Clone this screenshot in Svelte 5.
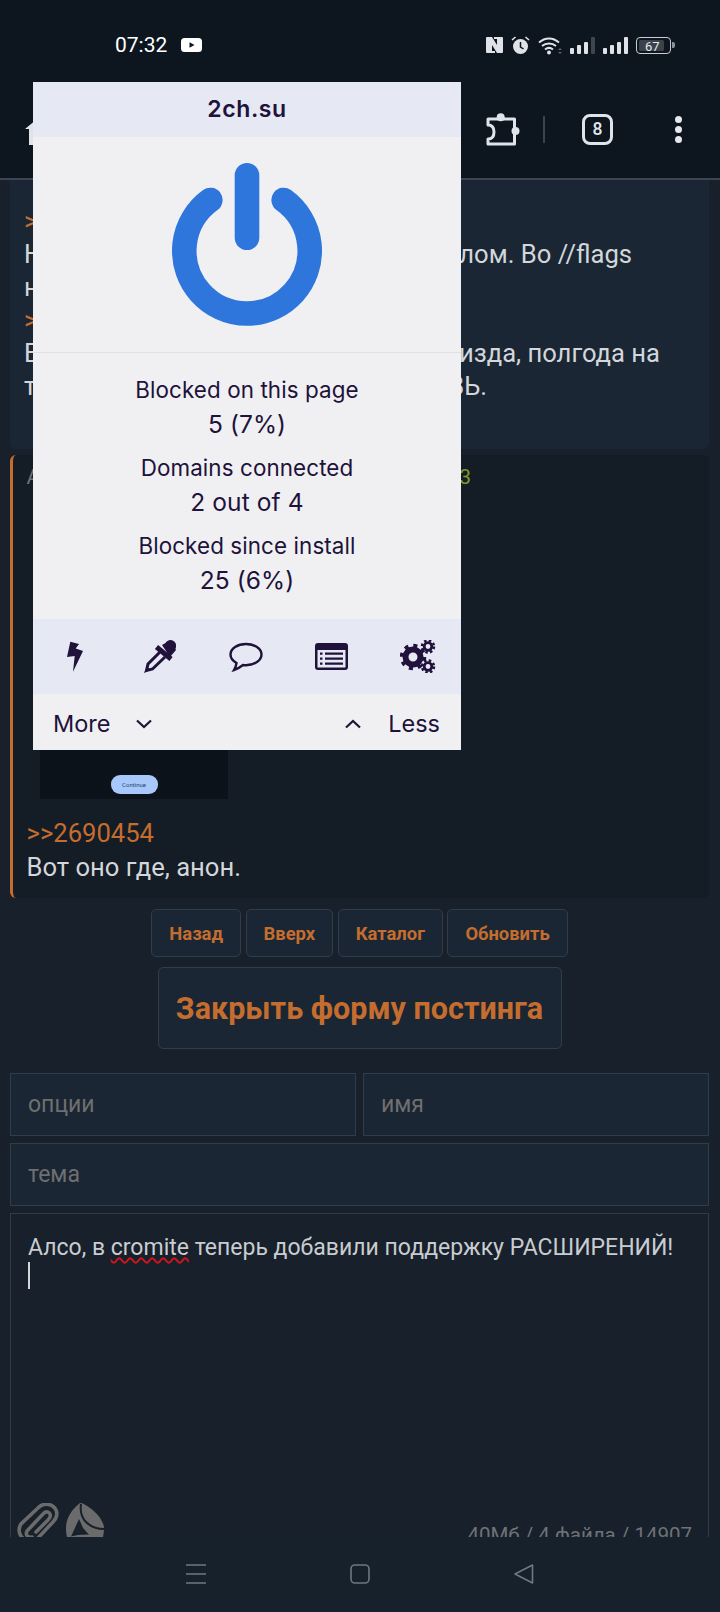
<script>
  const stats = [
    ['Blocked on this page', '5 (7%)'],
    ['Domains connected', '2 out of 4'],
    ['Blocked since install', '25 (6%)']
  ];
  const navButtons = ['Назад', 'Вверх', 'Каталог', 'Обновить'];
</script>

<div class="page">
  <header class="top">
    <div class="status">
      <span class="time">07:32</span>
      <svg class="yt" viewBox="0 0 21 14"><rect width="21" height="14" rx="3.5" fill="#fff"/><path d="M8.5 4.2 13.5 7l-5 2.8z" fill="#0d151f"/></svg>
      <div class="sys">
        <svg width="17" height="16" viewBox="0 0 17 16"><path d="M0 1a1 1 0 0 1 1-1h5l5 8V2H8V0h8a1 1 0 0 1 1 1v14a1 1 0 0 1-1 1h-5L6 8v6h3v2H1a1 1 0 0 1-1-1z" fill="#dfe2e6"/></svg>
        <svg width="19" height="18" viewBox="0 0 19 18"><circle cx="9.5" cy="10.5" r="7.5" fill="#dfe2e6"/><path d="M9.5 6v5l3 2" stroke="#0d151f" stroke-width="1.5" fill="none"/><path d="M1 4 4.5 1M18 4l-3.500-3" stroke="#dfe2e6" stroke-width="1.600"/></svg>
        <svg width="24" height="19" viewBox="0 0 24 19" fill="none" stroke="#dfe2e6" stroke-width="2"><path d="M1 6.500c6-5.500 14-5.500 20 0M4 10c4-3.500 10-3.500 14 0M7 13.500c2.500-2 5.500-2 8 0"/><circle cx="11" cy="16.500" r="2" fill="#dfe2e6" stroke="none"/><path d="M20 14l2-2 2 2zM20 16l2 2 2-2z" fill="#5a626c" stroke="none"/></svg>
        <svg width="25" height="17" viewBox="0 0 25 17"><rect y="11" width="4" height="6" rx="1" fill="#dfe2e6"/><rect x="7" y="8" width="4" height="9" rx="1" fill="#dfe2e6"/><rect x="14" y="5" width="4" height="12" rx="1" fill="#dfe2e6"/><rect x="21" width="4" height="17" rx="1" fill="#3d454e"/></svg>
        <svg width="25" height="17" viewBox="0 0 25 17"><rect y="11" width="4" height="6" rx="1" fill="#dfe2e6"/><rect x="7" y="8" width="4" height="9" rx="1" fill="#dfe2e6"/><rect x="14" y="5" width="4" height="12" rx="1" fill="#dfe2e6"/><rect x="21" width="4" height="17" rx="1" fill="#dfe2e6"/></svg>
        <div class="battery"><span class="level">67</span><i class="nub"></i></div>
      </div>
    </div>
    <div class="toolbar">
      <svg class="home" width="36" height="32" viewBox="0 0 36 32"><path d="M18 0 0 15h4v16h28V15h4z" fill="#dfe3ea"/></svg>
      <svg class="puzzle" width="34" height="34" viewBox="0 0 34 34">
        <path d="M2 6h26.500v25H2v-5c4.500 0 6-3.500 6-7s-1.500-7-6-7z" fill="none" stroke="#dfe3ea" stroke-width="3" stroke-linejoin="round"/>
        <circle cx="14.700" cy="4.200" r="4" fill="#dfe3ea"/>
        <circle cx="29.500" cy="18" r="4" fill="#dfe3ea"/>
      </svg>
      <i class="sep"></i>
      <div class="tabs">8</div>
      <div class="dots"><i></i><i></i><i></i></div>
    </div>
  </header>

  <main class="content">
    <article class="post first">
      <div class="line l1"><span class="quote">&gt;</span></div>
      <div class="line l2"><span>Н</span><span>лом. Во //flags</span></div>
      <div class="line"><span>н</span></div>
      <div class="line"><span class="quote">&gt;</span></div>
      <div class="line l5"><span>Е</span><span>изда, полгода на</span></div>
      <div class="line l6"><span>т</span><span>ВЬ.</span></div>
    </article>

    <article class="post second">
      <div class="line meta"><span class="name">А</span><span class="num">3</span></div>
      <div class="thumb"><span class="continue">Continue</span></div>
      <div class="line quote">&gt;&gt;2690454</div>
      <div class="line">Вот оно где, анон.</div>
    </article>

    <nav class="buttons">
      {#each navButtons as b}<button class="btn">{b}</button>{/each}
    </nav>
    <button class="btn big">Закрыть форму постинга</button>

    <form class="form">
      <div class="row">
        <input placeholder="опции" />
        <input placeholder="имя" />
      </div>
      <input placeholder="тема" />
      <div class="area">
        <div class="msg">Алсо, в <span class="typo">cromite</span> теперь добавили поддержку РАСШИРЕНИЙ!</div>
        <i class="caret"></i>
        <div class="tools">
          <svg width="42" height="40" viewBox="0 0 42 40" fill="none" stroke="#6b6b6b" stroke-width="3.600" stroke-linecap="round"><path d="M9 37C3 35 0 27 4 21L22 4c6-5 14-3 17 3 2 5 0 9-3 12L20 36"/><path d="M15 34c-4 1-7-2-5-6L27 10c2-2 5-1 6 1s0 4-2 6L19 29"/></svg>
          <svg width="38" height="40" viewBox="0 0 38 40">
            <path d="M14 0C6 6 0 15 0 25c0 6 1 10 3 15h32c2-4 3-10 3-15C38 18 30 9 24 5 20 2 17 0 14 0z" fill="#6b6b6b"/>
            <path d="M15 1c-1 7 0 13 5 18 4 4 11 7 18 7" fill="none" stroke="#17202b" stroke-width="2"/>
            <path d="M13 16 3 38h31v-5l-9 1-8-9z" fill="#17202b"/>
            <path d="M3 34c7-3 25-3 33-2l-1 8H3z" fill="#6b6b6b"/>
          </svg>
        </div>
        <div class="count">40Мб / 4 файла / 14907</div>
      </div>
    </form>
  </main>

  <footer class="navbar">
    <svg width="20" height="20" viewBox="0 0 20 20" stroke="#6d7885" stroke-width="1.600"><path d="M0 1h20M0 10h20M0 19h20"/></svg>
    <svg width="20" height="20" viewBox="0 0 20 20" fill="none" stroke="#6d7885" stroke-width="1.600"><rect x="1" y="1" width="18" height="18" rx="4"/></svg>
    <svg width="20" height="20" viewBox="0 0 20 20" fill="none" stroke="#6d7885" stroke-width="1.600" stroke-linejoin="round"><path d="M18.500 1v18L1 10z"/></svg>
  </footer>

  <aside class="popup">
    <div class="host">2ch.su</div>
    <div class="power">
      <svg width="150" height="163" viewBox="0 0 150 163" fill="none" stroke="#2e75dc" stroke-width="24.600" stroke-linecap="round">
        <path d="M38.300 37a62.700 62.700 0 1 0 73.400 0"/>
        <path d="M75 12.300v62.400"/>
      </svg>
    </div>
    <div class="stats">
      {#each stats as [label, value]}
        <div class="stat"><div>{label}</div><div class="value">{value}</div></div>
      {/each}
    </div>
    <div class="icons">
      <svg class="bolt" width="16" height="31" viewBox="0 0 16 31"><path d="M3.300.700 12 3 8.700 7.500 16 10 6 30.700 7.700 15 0 16z" fill="#20123a"/></svg>
      <svg width="32" height="33" viewBox="0 0 32 33">
        <circle cx="26.500" cy="5.700" r="5.700" fill="#20123a"/>
        <path d="M18 5 27 0l5 10-6 7z" fill="#20123a"/>
        <path d="M12.500 7 27 19" stroke="#20123a" stroke-width="5" fill="none"/>
        <path d="M16 12 4 24l-1.500 6.500L8.500 29 21 17" stroke="#20123a" stroke-width="3" fill="none"/>
        <path d="M0 33l3-6 3 3z" fill="#20123a"/>
      </svg>
      <svg class="bubble" width="34" height="30" viewBox="0 0 34 30" fill="none" stroke="#20123a" stroke-width="2.400"><path d="M17 2C8.500 2 1.500 6.500 1.500 12.500c0 3.500 2.500 6.500 6 8.500-.3 2.500-1 4.500-2.500 7 3.500-1 6.500-3 9-5 1 .2 2 .2 3 .2 8.500 0 15.500-4.700 15.500-10.700S25.500 2 17 2z"/></svg>
      <svg width="33" height="27" viewBox="0 0 33 27"><rect width="33" height="27" rx="3" fill="#20123a"/><rect x="2.500" y="7" width="28" height="17.500" fill="#e6e8f3"/><path d="M5 9.500h2.500v2.200H5zM5 14.500h2.500v2.200H5zM5 19.500h2.500v2.200H5zM10 9.500h18v2.200H10zM10 14.500h18v2.200H10zM10 19.500h18v2.200H10z" fill="#20123a"/></svg>
      <svg width="36" height="33" viewBox="0 0 36 33">
        <g fill="none" stroke="#20123a">
          <circle cx="13" cy="17" r="7.500" stroke-width="6"/>
          <circle cx="13" cy="17" r="11.500" stroke-width="3.500" stroke-dasharray="4 5.030"/>
          <circle cx="28" cy="6.500" r="3.800" stroke-width="2.800"/>
          <circle cx="28" cy="6.500" r="6" stroke-width="2.500" stroke-dasharray="2.500 2.210"/>
          <circle cx="28" cy="26.500" r="3.800" stroke-width="2.800"/>
          <circle cx="28" cy="26.500" r="6" stroke-width="2.500" stroke-dasharray="2.500 2.210"/>
        </g>
      </svg>
    </div>
    <div class="more">
      <span class="ml">More</span>
      <svg width="16" height="10" viewBox="0 0 16 10" fill="none" stroke="#20123a" stroke-width="2.200"><path d="M1 1.500 8 8l7-6.500"/></svg>
      <span class="sp"></span>
      <svg width="16" height="10" viewBox="0 0 16 10" fill="none" stroke="#20123a" stroke-width="2.200"><path d="M1 8.500 8 2l7 6.500"/></svg>
      <span class="ll">Less</span>
    </div>
  </aside>
</div>

<style>
  :global(body) { margin: 0; background: #17202b; }
  .page { position: relative; width: 720px; height: 1612px; display: flex; flex-direction: column; overflow: hidden; background: #17202b; color: #d3d6da; font-family: Roboto, sans-serif; }

  .top { height: 178px; background: #0d151f; border-bottom: 2px solid #3c4550; flex: none; }
  .status { display: flex; align-items: center; height: 90px; padding: 0 46px 0 115px; color: #fff; }
  .time { font: 400 21px/1 Roboto, sans-serif; }
  .yt { width: 21px; height: 14px; margin-left: 14px; }
  .sys { margin-left: auto; display: flex; align-items: center; gap: 8px; }
  .battery { position: relative; width: 35px; height: 17px; border: 1.500px solid #c9ccd0; border-radius: 4px; box-sizing: border-box; padding: 2px; display: flex; margin-right: 3px; }
  .level { width: 67%; background: #3a424b; color: #e6e8ea; font: 13px/13px Roboto, sans-serif; padding-left: 6px; border-radius: 1.500px; white-space: nowrap; }
  .nub { position: absolute; right: -4.500px; top: 4px; width: 2.500px; height: 6px; background: #8a9097; border-radius: 0 2px 2px 0; }

  .toolbar { display: flex; align-items: center; height: 79px; padding: 0 38.500px 9px 0; }
  .home { margin-left: 25px; }
  .puzzle { margin-left: auto; }
  .sep { width: 2px; height: 27px; background: #3a4450; margin: 0 37px 0 23px; }
  .tabs { width: 31px; height: 31px; box-sizing: border-box; border: 3px solid #dfe3ea; border-radius: 8px; color: #e6e8ec; font: 500 17.500px/25px Roboto, sans-serif; text-align: center; }
  .dots { display: flex; flex-direction: column; gap: 3px; margin-left: 61.500px; }
  .dots i { width: 7px; height: 7px; background: #e6e8ec; border-radius: 50%; }

  .content { flex: 1; min-height: 0; overflow: hidden; padding: 0 11px 0 10px; }
  .line { font-size: 25.600px; line-height: 33px; display: flex; justify-content: space-between; white-space: nowrap; }
  .quote { color: #c46d2e; }
  .post.first { background: #1a2633; padding: 25px 0 45px 14px; border-radius: 0 0 6px 6px; height: 199px; }
  .l2 { padding-right: 77px; }
  .l5 { padding-right: 49px; }
  .l6 { padding-right: 222px; }

  .post.second { margin-top: 6px; background: #141c26; border-left: 3px solid #c46d2e; border-radius: 6px; padding: 5px 0 13px 13.500px; height: 425px; }
  .second .line { line-height: 34px; }
  .second .meta { font-size: 21px; padding-right: 238px; }
  .name { color: #6e7276; }
  .num { color: #7f9a2a; }
  .thumb { margin: 2px 0 17px 13.500px; width: 188px; height: 303px; background: #0c1219; display: flex; align-items: flex-end; justify-content: center; box-sizing: border-box; padding-bottom: 5px; }
  .continue { width: 47px; height: 19px; border-radius: 9px; background: #a8c7fa; color: #24476f; font-size: 6px; line-height: 19px; text-align: center; }

  .buttons { display: flex; justify-content: center; gap: 4.500px; margin-top: 11px; }
  .btn { height: 48px; padding: 0 17px; box-sizing: border-box; background: #1a2633; border: 1px solid #2f3d4a; border-radius: 5px; color: #c46d2e; font: 700 18.400px Roboto, sans-serif; }
  .big { display: block; margin: 10px auto 0; height: 82px; width: 404px; padding: 0; font-size: 30.500px; }

  .form { display: flex; flex-direction: column; gap: 7px; margin-top: 24px; }
  .row { display: grid; grid-template-columns: 1fr 1fr; gap: 7px; }
  input { height: 63px; width: 100%; box-sizing: border-box; background: #1a2633; border: 1px solid #2f3d4a; padding: 0 17px; color: #d3d6da; font: 23px Roboto, sans-serif; outline: none; }
  input::placeholder { color: #6f6f6f; opacity: 1; }

  .area { position: relative; height: 400px; box-sizing: border-box; border: 1px solid #2f3d4a; padding: 20px 17px; font-size: 23px; line-height: 28px; color: #c9ccd0; }
  .msg { white-space: nowrap; }
  .typo { text-decoration: underline wavy #d4141c 1.500px; text-underline-offset: 2px; }
  .caret { display: block; width: 1.500px; height: 27px; background: #d3d6da; }
  .tools { position: absolute; left: 6px; top: 289px; display: flex; gap: 7px; }
  .count { position: absolute; right: 16px; top: 307px; font-size: 20.500px; color: #6f7276; white-space: nowrap; }

  .navbar { flex: none; height: 75px; box-sizing: border-box; background: #17212c; display: flex; justify-content: center; gap: 144px; align-items: center; padding-bottom: 1px; }

  .popup { position: absolute; left: 33px; top: 82px; width: 428px; height: 668px; background: #f0f0f3; color: #20123a; font-family: Inter, sans-serif; display: flex; flex-direction: column; }
  .host { height: 55px; background: #e6e8f3; text-align: center; font: 600 23px/54px Inter, sans-serif; letter-spacing: .6px; flex: none; }
  .power { height: 216px; box-sizing: border-box; border-bottom: 1px solid #e0e0e4; padding-top: 26px; display: flex; justify-content: center; align-items: flex-start; flex: none; }
  .stats { flex: 1; padding-top: 20px; text-align: center; font-size: 22.400px; line-height: 34px; display: flex; flex-direction: column; gap: 10px; letter-spacing: .1px; }
  .value { font-size: 24.500px; }
  .icons { height: 75px; background: #e6e8f3; display: flex; justify-content: space-between; align-items: center; padding: 0 25px 0 34px; flex: none; }
  .bolt { margin-right: 9px; }
  .bubble { margin-left: 1px; }
  .more { height: 56px; box-sizing: border-box; padding: 3px 21px 0 20px; display: flex; align-items: center; font-size: 23.500px; flex: none; }
  .ml { margin-right: 26px; }
  .sp { flex: 1; }
  .ll { margin-left: 27px; }
</style>
